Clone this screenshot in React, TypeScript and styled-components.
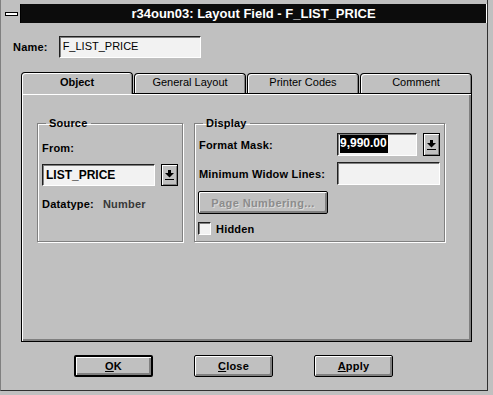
import React from "react";
import styled, { createGlobalStyle } from "styled-components";

const Global = createGlobalStyle`
  html, body { margin: 0; padding: 0; background: #c0c0c0; }
  body { font-family: "Liberation Sans", Arial, sans-serif; }
  * { box-sizing: border-box; }
`;

const Screen = styled.div`
  width: 493px;
  height: 395px;
  background: #c0c0c0;
  overflow: hidden;
`;

const Frame = styled.div`
  width: 488px;
  height: 391px;
  border-right: 1px solid #303030;
  border-bottom: 1px solid #303030;
  border-left: 1px solid #808080;
  padding: 4px 0 0 1px;
  display: flex;
  flex-direction: column;
`;

const TitleBar = styled.div`
  display: flex;
  height: 19px;
  width: 485px;
  border-right: 1px solid #fff;
`;

const SysMenu = styled.div`
  width: 19px;
  height: 19px;
  background: #c0c0c0;
  display: flex;
  align-items: center;
  justify-content: center;
  border-right: 1px solid #000;
`;

const SysBar = styled.div`
  width: 13px;
  height: 4px;
  background: #fff;
  border: 1px solid #000;
`;

const TitleText = styled.div`
  flex: 1;
  background: #0c0c0c;
  color: #fff;
  font-weight: bold;
  font-size: 13px;
  line-height: 19px;
  text-align: center;
  white-space: nowrap;
`;

const Body = styled.div`
  padding: 13px 0 0 0;
  display: flex;
  flex-direction: column;
`;

const NameRow = styled.div`
  display: flex;
  align-items: center;
  padding-left: 11px;
  gap: 11px;
`;

const Label = styled.span<{ $muted?: boolean }>`
  font-size: 11px;
  font-weight: bold;
  letter-spacing: 0.2px;
  color: ${(p) => (p.$muted ? "#383838" : "#000")};
  white-space: nowrap;
`;

const TextBox = styled.div<{ $w: number; $h?: number; $bold?: boolean }>`
  width: ${(p) => p.$w}px;
  height: ${(p) => p.$h ?? 22}px;
  background: #f2f2f2;
  border: 1px solid;
  border-color: #202020 #ffffff #ffffff #202020;
  box-shadow: inset 1px 1px 0 #808080;
  font-size: ${(p) => (p.$bold ? "12px" : "11px")};
  font-weight: ${(p) => (p.$bold ? "bold" : "normal")};
  color: #000;
  padding: 3px 0 0 3px;
  white-space: nowrap;
`;

const TabArea = styled.div`
  margin: 14px 0 0 19px;
  width: 451px;
  display: flex;
  flex-direction: column;
`;

const TabStrip = styled.div`
  display: flex;
  align-items: flex-end;
  height: 21px;
`;

const Tab = styled.div<{ $active?: boolean }>`
  flex: 1;
  height: ${(p) => (p.$active ? "22px" : "20px")};
  margin-bottom: ${(p) => (p.$active ? "-1px" : "0")};
  margin-right: 1px;
  position: relative;
  z-index: ${(p) => (p.$active ? 2 : 1)};
  background: #c0c0c0;
  border: 1px solid #000;
  border-bottom: none;
  border-radius: 4px 4px 0 0;
  box-shadow: inset 1px 1px 0 #fff, inset -1px 0 0 #808080;
  font-size: 11px;
  font-weight: ${(p) => (p.$active ? "bold" : "normal")};
  text-align: center;
  line-height: ${(p) => (p.$active ? "19px" : "17px")};
  color: #000;
  &:last-child { margin-right: 0; }
`;

const Panel = styled.div`
  height: 249px;
  border: 1px solid #000;
  box-shadow: inset 1px 1px 0 #fff, inset -2px -2px 0 #808080;
  display: flex;
  gap: 11px;
  padding: 23px 0 0 15px;
  align-items: flex-start;
`;

const Group = styled.fieldset<{ $w: number }>`
  width: ${(p) => p.$w}px;
  height: 125px;
  margin: 0;
  padding: 0 4px;
  border: 1px solid #808080;
  box-shadow: 1px 1px 0 #fff, inset 1px 1px 0 #fff;
`;

const Legend = styled.legend`
  font-size: 11px;
  font-weight: bold;
  letter-spacing: 0.2px;
  padding: 0 3px;
  margin-left: 4px;
  color: #000;
`;

const SourceBody = styled.div`
  display: flex;
  flex-direction: column;
  padding-top: 13px;
`;

const ComboRow = styled.div`
  display: flex;
  gap: 6px;
  margin-top: 10px;
`;

const ArrowButton = styled.div<{ $h?: number }>`
  width: 17px;
  height: ${(p) => p.$h ?? 22}px;
  background: #c0c0c0;
  border: 1px solid #000;
  box-shadow: inset 1px 1px 0 #fff, inset -1px -1px 0 #808080;
  display: flex;
  align-items: center;
  justify-content: center;
`;

const InfoRow = styled.div`
  display: flex;
  gap: 9px;
  margin-top: 12px;
`;

const DisplayGrid = styled.div`
  display: grid;
  grid-template-columns: 132px 80px 17px;
  column-gap: 6px;
  row-gap: 6px;
  align-items: center;
  padding-top: 4px;
`;

const Wide = styled.div`
  grid-column: 2 / 4;
`;

const Selected = styled.span`
  background: #000;
  color: #fff;
  font-weight: bold;
  font-size: 12px;
  padding: 1px 1px 3px 0;
`;

const DisabledButton = styled.div`
  width: 130px;
  height: 23px;
  margin: 6px 0 0 -1px;
  border: 1px solid #000;
  border-radius: 2px;
  background: #c0c0c0;
  box-shadow: inset 1px 1px 0 #fff, inset -2px -2px 0 #808080;
  font-size: 11px;
  font-weight: bold;
  color: #8c8c8c;
  text-shadow: 1px 1px 0 #dcdcdc;
  letter-spacing: 0.4px;
  display: flex;
  align-items: center;
  justify-content: center;
`;

const CheckRow = styled.label`
  display: flex;
  align-items: center;
  gap: 5px;
  margin: 8px 0 0 -1px;
`;

const CheckBox = styled.span`
  width: 13px;
  height: 13px;
  background: #f2f2f2;
  border: 1px solid;
  border-color: #202020 #fff #fff #202020;
  box-shadow: inset 1px 1px 0 #808080;
`;

const ButtonRow = styled.div`
  display: flex;
  gap: 41px;
  margin: 13px 0 0 72px;
`;

const PushButton = styled.div<{ $default?: boolean }>`
  width: 79px;
  height: 22px;
  border: ${(p) => (p.$default ? "2px" : "1px")} solid #000;
  border-radius: 2px;
  background: #c0c0c0;
  box-shadow: inset 1px 1px 0 #fff, inset -2px -2px 0 #808080;
  font-size: 11px;
  font-weight: bold;
  color: #000;
  display: flex;
  align-items: center;
  justify-content: center;
  letter-spacing: 0.2px;
`;

const DropArrow = () => (
  <svg width="9" height="10" viewBox="0 0 9 10">
    <rect x="3" y="0" width="3" height="3" fill="#000" />
    <polygon points="0,3 9,3 4.5,7.5" fill="#000" />
    <rect x="0" y="9" width="9" height="1" fill="#000" />
  </svg>
);

export default function App() {
  return (
    <Screen>
      <Global />
      <Frame>
        <TitleBar>
          <SysMenu>
            <SysBar />
          </SysMenu>
          <TitleText>r34oun03: Layout Field - F_LIST_PRICE</TitleText>
        </TitleBar>
        <Body>
          <NameRow>
            <Label>Name:</Label>
            <TextBox $w={142}>F_LIST_PRICE</TextBox>
          </NameRow>
          <TabArea>
            <TabStrip>
              <Tab $active>Object</Tab>
              <Tab>General Layout</Tab>
              <Tab>Printer Codes</Tab>
              <Tab>Comment</Tab>
            </TabStrip>
            <Panel>
              <Group $w={146}>
                <Legend>Source</Legend>
                <SourceBody>
                  <Label>From:</Label>
                  <ComboRow>
                    <TextBox $w={113} $bold>LIST_PRICE</TextBox>
                    <ArrowButton>
                      <DropArrow />
                    </ArrowButton>
                  </ComboRow>
                  <InfoRow>
                    <Label>Datatype:</Label>
                    <Label $muted>Number</Label>
                  </InfoRow>
                </SourceBody>
              </Group>
              <Group $w={251}>
                <Legend>Display</Legend>
                <DisplayGrid>
                  <Label>Format Mask:</Label>
                  <TextBox $w={80} $h={23} style={{ paddingTop: 2, paddingLeft: 2 }}>
                    <Selected>9,990.00</Selected>
                  </TextBox>
                  <ArrowButton $h={23}>
                    <DropArrow />
                  </ArrowButton>
                  <Label>Minimum Widow Lines:</Label>
                  <Wide>
                    <TextBox $w={103} $h={23} />
                  </Wide>
                </DisplayGrid>
                <DisabledButton>Page Numbering...</DisabledButton>
                <CheckRow>
                  <CheckBox />
                  <Label>Hidden</Label>
                </CheckRow>
              </Group>
            </Panel>
          </TabArea>
          <ButtonRow>
            <PushButton $default>
              <span><u>O</u>K</span>
            </PushButton>
            <PushButton>
              <span><u>C</u>lose</span>
            </PushButton>
            <PushButton>
              <span><u>A</u>pply</span>
            </PushButton>
          </ButtonRow>
        </Body>
      </Frame>
    </Screen>
  );
}
